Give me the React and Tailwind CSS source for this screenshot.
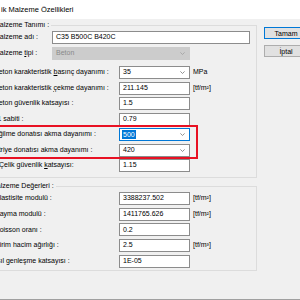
import React from "react";

const rows1 = [
  { label: <>Beton karakteristik <u>b</u>asınç dayanımı :</>, value: "35", kind: "select", unit: "MPa" },
  { label: <>Beton karakteristik <u>ç</u>ekme dayanımı :</>, value: "211.145", unit: "[tf/m²]" },
  { label: "Beton güvenlik katsayısı :", value: "1.5" },
  { label: "k1 sabiti :", value: "0.79" },
];

const rows2 = [
  { label: <><u>E</u>lastisite modulü :</>, value: "3388237.502", unit: "[tf/m²]" },
  { label: "Kayma modulü :", value: "1411765.626", unit: "[tf/m²]" },
  { label: "Poisson oranı :", value: "0.2" },
  { label: "Birim hacim ağırlığı :", value: "2.5", unit: "[tf/m³]" },
  { label: "Isıl genleşme katsayısı :", value: "1E-05" },
];

function Chevron({ color = "#777" }) {
  return (
    <svg width="5" height="3" viewBox="0 0 5 3" className="shrink-0">
      <path d="M0.4 0.4 L2.5 2.5 L4.6 0.4" fill="none" stroke={color} strokeWidth="0.8" />
    </svg>
  );
}

function TextBox({ value, w = "w-[71px]" }) {
  return (
    <div className={`${w} h-[13px] shrink-0 border border-[#8c8c8c] bg-white px-[3px] flex items-center overflow-hidden whitespace-nowrap`}>
      {value}
    </div>
  );
}

function Select({ value, focused, disabled, w = "w-[71px]" }) {
  const box = disabled
    ? "border-[#cccccc] bg-[#cccccc] text-[#8a8a8a]"
    : focused
    ? "border-[#0078d7] bg-white"
    : "border-[#8c8c8c] bg-white";
  return (
    <div className={`${w} h-[13px] shrink-0 border ${box} pl-[2px] pr-[4px] flex items-center justify-between`}>
      {focused ? (
        <span className="bg-[#0078d7] text-white px-[1px] leading-[9px]">{value}</span>
      ) : (
        <span className="px-[1px]">{value}</span>
      )}
      <Chevron color={disabled ? "#a0a0a0" : "#777"} />
    </div>
  );
}

function Row({ label, children, unit, lw = "w-[125px]" }) {
  return (
    <div className="flex items-center h-[13px]">
      <div className={`${lw} shrink-0 whitespace-nowrap`}>{label}</div>
      {children}
      {unit && <div className="ml-[3px] whitespace-nowrap">{unit}</div>}
    </div>
  );
}

function ValueRow({ r, lw }) {
  return (
    <Row label={r.label} unit={r.unit} lw={lw}>
      {r.kind === "select" ? <Select value={r.value} /> : <TextBox value={r.value} />}
    </Row>
  );
}

export default function App() {
  return (
    <div className="w-[300px] h-[300px] overflow-hidden bg-[#f0f0f0] text-[7px] text-black font-['Liberation_Sans',Arial,sans-serif] flex flex-col">
      <div className="h-[19px] shrink-0 bg-white flex items-center pl-[1px] text-[7.5px]">
        ik Malzeme Özellikleri
      </div>

      <div className="flex-1 flex border-b border-[#a0a0a0]">
        <div className="w-[271px] shrink-0 -ml-[14px] flex flex-col">
          <fieldset className="border border-[#dcdcdc] pb-[5px]">
            <legend className="ml-[7px] pr-[2px] leading-[12px]">Malzeme Tanımı :</legend>
            <div className="pl-[7px] flex flex-col">
              <Row label={<><u>M</u>alzeme adı :</>} lw="w-[58px]">
                <TextBox value="C35 B500C B420C" w="w-[198px]" />
              </Row>
              <div className="mt-[3px]">
                <Row label={<>Malzeme <u>t</u>ipi :</>} lw="w-[58px]">
                  <Select value="Beton" disabled w="w-[138px]" />
                </Row>
              </div>
              <div className="mt-[6px] flex flex-col gap-[2.5px]">
                {rows1.map((r, i) => (
                  <ValueRow key={i} r={r} />
                ))}
                <div className="relative flex flex-col gap-[2.5px]">
                  <Row label="Eğilme donatısı akma dayanımı :">
                    <Select value="500" focused />
                  </Row>
                  <Row label="Etriye donatısı akma dayanımı :">
                    <Select value="420" />
                  </Row>
                  <div className="absolute -top-[3px] -bottom-[2px] -left-[20px] w-[224px] border-2 border-[#e81123] pointer-events-none" />
                </div>
                <Row label={<span className="pl-[5px]">Çelik güvenlik <u>k</u>atsayısı:</span>}>
                  <TextBox value="1.15" />
                </Row>
              </div>
            </div>
          </fieldset>

          <fieldset className="mt-[2px] border border-[#dcdcdc] pb-[2px]">
            <legend className="ml-[4px] pr-[2px] leading-[12px]">Malzeme Değerleri :</legend>
            <div className="pl-[8px] flex flex-col gap-[2.7px]">
              {rows2.map((r, i) => (
                <ValueRow key={i} r={r} lw="w-[124px]" />
              ))}
            </div>
          </fieldset>
        </div>

        <div className="ml-[7px] mt-[8px] flex flex-col gap-[6px]">
          <button className="w-[44px] h-[12px] border border-[#0078d7] bg-[#e1e1e1] flex items-center justify-center leading-none">
            Tamam
          </button>
          <button className="w-[44px] h-[12px] border border-[#adadad] bg-[#e1e1e1] flex items-center justify-center leading-none">
            İptal
          </button>
        </div>
      </div>
    </div>
  );
}
